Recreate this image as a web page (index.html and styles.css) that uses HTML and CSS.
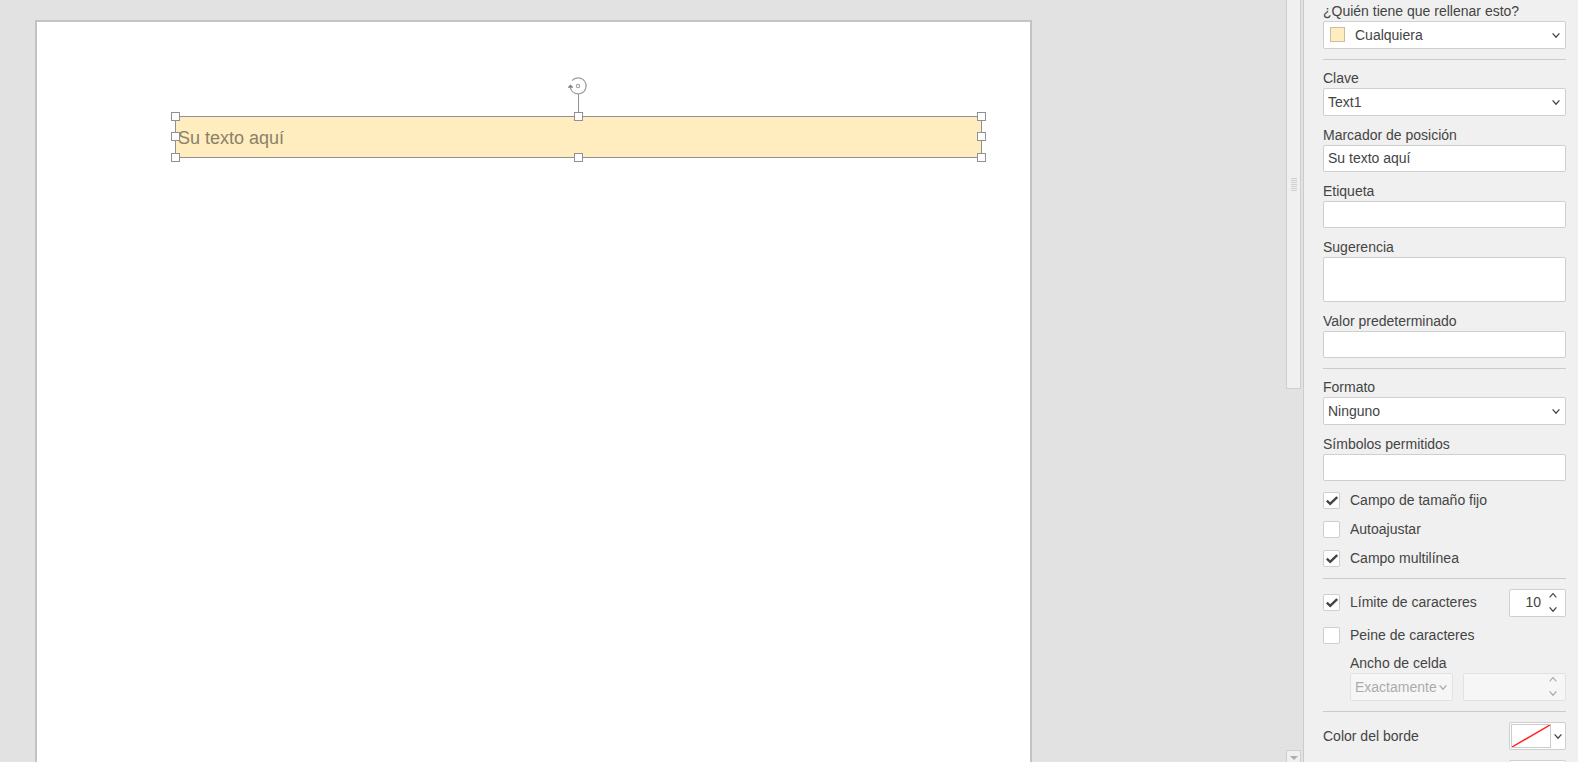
FILE: index.html
```html
<!DOCTYPE html>
<html lang="es">

  <head>
    <meta charset="UTF-8">
    <meta name="viewport" content="width=device-width, initial-scale=1.0">
    <title>Editor de formularios</title>
    <link rel="stylesheet" href="styles.css">
  </head>

  <body>
    <svg class="sprite" width="0" height="0" aria-hidden="true">
      <symbol id="down" viewBox="0 0 8 7"><path d="M.6 1.4 4 5.2 7.4 1.4" fill="none" stroke="currentColor" stroke-width="1.3" /></symbol>
      <symbol id="up" viewBox="0 0 8 7"><path d="M.6 5.4 4 1.6 7.4 5.4" fill="none" stroke="currentColor" stroke-width="1.1" /></symbol>
      <symbol id="check" viewBox="0 0 12 10"><path d="M.8 4.6 4.2 7.8 11.2 1" fill="none" stroke="currentColor" stroke-width="2.4" /></symbol>
    </svg>

    <main class="editor">
      <div class="page">
        <div class="field">
          <span class="field-text">Su texto aquí</span>
          <svg class="rotate" viewBox="0 0 20 20" aria-hidden="true">
            <path d="M4 4.7A8 8 0 1 1 2.3 11.5" fill="none" stroke="#a0a0a0" stroke-width="1.2" />
            <circle cx="10" cy="10" r="1.7" fill="none" stroke="#aaa" stroke-width="1.2" />
            <path d="M0 11.8V11L2.5 8.5 5 11v.8z" fill="#808080" />
          </svg>
          <i class="stem"></i>
          <i class="handle top left"></i>
          <i class="handle top center"></i>
          <i class="handle top right"></i>
          <i class="handle middle left"></i>
          <i class="handle middle right"></i>
          <i class="handle bottom left"></i>
          <i class="handle bottom center"></i>
          <i class="handle bottom right"></i>
        </div>
      </div>
    </main>

    <div class="scrollbar">
      <div class="thumb"><i class="grip"></i></div>
      <button class="scroll-down" aria-label="Bajar"><i class="triangle"></i></button>
    </div>

    <aside class="panel">
      <section class="group">
        <div class="row">
          <label for="role">¿Quién tiene que rellenar esto?</label>
          <div class="select with-swatch">
            <i class="swatch"></i>
            <select id="role"><option>Cualquiera</option></select>
            <svg class="arrow"><use href="#down" /></svg>
          </div>
        </div>
      </section>

      <section class="group">
        <div class="row">
          <label for="key">Clave</label>
          <div class="select">
            <select id="key"><option>Text1</option></select>
            <svg class="arrow"><use href="#down" /></svg>
          </div>
        </div>
        <div class="row">
          <label for="placeholder">Marcador de posición</label>
          <input type="text" id="placeholder" value="Su texto aquí">
        </div>
        <div class="row">
          <label for="tag">Etiqueta</label>
          <input type="text" id="tag">
        </div>
        <div class="row">
          <label for="tip">Sugerencia</label>
          <textarea id="tip"></textarea>
        </div>
        <div class="row">
          <label for="default">Valor predeterminado</label>
          <input type="text" id="default">
        </div>
      </section>

      <section class="group">
        <div class="row">
          <label for="format">Formato</label>
          <div class="select">
            <select id="format"><option>Ninguno</option></select>
            <svg class="arrow"><use href="#down" /></svg>
          </div>
        </div>
        <div class="row">
          <label for="symbols">Símbolos permitidos</label>
          <input type="text" id="symbols">
        </div>
        <label class="check"><input type="checkbox" checked><svg><use href="#check" /></svg>Campo de tamaño fijo</label>
        <label class="check"><input type="checkbox"><svg><use href="#check" /></svg>Autoajustar</label>
        <label class="check"><input type="checkbox" checked><svg><use href="#check" /></svg>Campo multilínea</label>
      </section>

      <section class="group tight">
        <div class="line">
          <label class="check"><input type="checkbox" checked><svg><use href="#check" /></svg>Límite de caracteres</label>
          <div class="spinner small">
            <input type="text" value="10" aria-label="Límite">
            <div class="steps">
              <button aria-label="Más"><svg><use href="#up" /></svg></button>
              <button aria-label="Menos"><svg><use href="#down" /></svg></button>
            </div>
          </div>
        </div>
        <label class="check"><input type="checkbox"><svg><use href="#check" /></svg>Peine de caracteres</label>
        <div class="row indent">
          <label for="cell">Ancho de celda</label>
          <div class="pair">
            <div class="select disabled">
              <select id="cell" disabled><option>Exactamente</option></select>
              <svg class="arrow"><use href="#down" /></svg>
            </div>
            <div class="spinner disabled">
              <input type="text" aria-label="Ancho" disabled>
              <div class="steps">
                <button aria-label="Más" disabled><svg><use href="#up" /></svg></button>
                <button aria-label="Menos" disabled><svg><use href="#down" /></svg></button>
              </div>
            </div>
          </div>
        </div>
      </section>

      <section class="group tight">
        <div class="line">
          <label for="border-color">Color del borde</label>
          <button class="color" id="border-color">
            <svg class="none" viewBox="0 0 38 21" preserveAspectRatio="none"><path d="M0 21 38 0" stroke="#f22" stroke-width="1.4" /></svg>
            <svg class="caret"><use href="#down" /></svg>
          </button>
        </div>
        <div class="line">
          <span></span>
          <button class="color" aria-label="Color de fondo"></button>
        </div>
      </section>
    </aside>
  </body>

</html>
```

FILE: styles.css
```css
* {
  box-sizing: border-box;
}

body {
  display: flex;
  height: 100vh;
  margin: 0;
  overflow: hidden;
  background-color: #e2e2e2;
  color: #444;
  font: 14px/18px "Liberation Sans", Arial, sans-serif;
}

input,
select,
textarea,
button {
  margin: 0;
  border: 1px solid #cfcfcf;
  border-radius: 2px;
  background-color: #fff;
  color: inherit;
  font: inherit;
}

.sprite {
  position: absolute;
}

/* document */
.editor {
  flex: 1;
  display: flex;
  padding: 20px 254px 0 35px;
}

.page {
  flex: 1;
  padding: 94px 48px 0 138px;
  border: 2px solid #c0c4c5;
  border-bottom: 0;
  background-color: #fff;
}

.field {
  position: relative;
  display: flex;
  align-items: center;
  height: 42px;
  padding: 2px 0 0 2px;
  border: 1px solid #919191;
  background-color: #ffedbf;
}

.field-text {
  color: #8b8068;
  font-size: 18px;
  line-height: 24px;
}

.handle {
  position: absolute;
  width: 9px;
  height: 9px;
  border: 1px solid #919191;
  background-color: #fff;
}

.top { top: -5px; }
.middle { top: 15px; }
.bottom { bottom: -5px; }
.left { left: -5px; }
.center { left: calc(50% - 5px); }
.right { right: -5px; }

.stem {
  position: absolute;
  top: -23px;
  left: calc(50% - 1px);
  width: 1px;
  height: 20px;
  background-color: #919191;
}

.rotate {
  position: absolute;
  top: -41px;
  left: calc(50% - 11px);
  width: 20px;
  height: 20px;
}

/* scrollbar */
.scrollbar {
  display: flex;
  flex-direction: column;
  justify-content: space-between;
  width: 17px;
  padding-right: 2px;
}

.thumb {
  display: flex;
  align-items: center;
  justify-content: center;
  height: 51%;
  padding-bottom: 18px;
  border: 1px solid #cfcfcf;
  border-top: 0;
  background-color: #f0f0f0;
}

.grip {
  width: 6px;
  height: 14px;
  background: repeating-linear-gradient(#cfcfcf 0 1px, #f0f0f0 1px 2px);
}

.scroll-down {
  display: flex;
  align-items: center;
  justify-content: center;
  height: 12px;
  padding: 2px 0 0;
  border-bottom: 0;
  border-radius: 0;
  background-color: #f0f0f0;
}

.triangle {
  border: 4px solid transparent;
  border-top-color: #adadad;
  border-bottom: 0;
}

/* settings */
.panel {
  width: 275px;
  padding: 3px 12px 0 19px;
  overflow: hidden;
  border-left: 1px solid #cbcbcb;
  background-color: #f0f0f0;
}

.group {
  display: flex;
  flex-direction: column;
  gap: 11px;
}

.group.tight {
  gap: 10px;
}

.group + .group {
  margin-top: 10px;
  padding-top: 10px;
  border-top: 1px solid #cbcbcb;
}

.row {
  display: flex;
  flex-direction: column;
}

.row > label {
  padding-bottom: 2px;
  line-height: 16px;
}

.row > input {
  height: 27px;
  padding: 0 4px 2px;
}

textarea {
  height: 45px;
  resize: none;
}

.select {
  position: relative;
  display: flex;
}

.select select {
  flex: 1;
  min-width: 0;
  height: 28px;
  padding: 0 4px 1px;
  appearance: none;
}

.select.with-swatch select {
  padding-left: 31px;
}

.swatch {
  position: absolute;
  top: 6px;
  left: 7px;
  width: 15px;
  height: 15px;
  border: 1px solid #cbbd97;
  background-color: #ffedbf;
}

.arrow {
  position: absolute;
  top: 11px;
  right: 6px;
  width: 8px;
  height: 7px;
  pointer-events: none;
}

.check {
  position: relative;
  display: flex;
  align-items: center;
  gap: 10px;
  padding-bottom: 1px;
  line-height: 17px;
}

.check input {
  width: 17px;
  height: 17px;
  appearance: none;
}

.check svg {
  position: absolute;
  left: 3px;
  width: 12px;
  height: 10px;
  visibility: hidden;
}

.check input:checked + svg {
  visibility: visible;
}

.line {
  display: flex;
  align-items: center;
  justify-content: space-between;
}

.spinner {
  display: flex;
  min-width: 0;
  height: 28px;
  border: 1px solid #cfcfcf;
  border-radius: 2px;
  background-color: #fff;
}

.spinner.small {
  width: 57px;
}

.spinner input {
  flex: 1;
  min-width: 0;
  padding: 0 8px 2px 0;
  border: 0;
  background: none;
  text-align: right;
}

.steps {
  display: flex;
  flex-direction: column;
  justify-content: space-between;
  width: 16px;
  padding: 2px 0 3px;
}

.steps button {
  display: flex;
  padding: 0;
  border: 0;
  background: none;
}

.steps svg {
  width: 8px;
  height: 7px;
}

.indent {
  padding-left: 27px;
}

.pair {
  display: grid;
  grid-template-columns: minmax(0, 1fr) minmax(0, 1fr);
  gap: 10px;
}

.disabled {
  opacity: 0.4;
}

.disabled select {
  opacity: 1;
}

.color {
  display: flex;
  align-items: center;
  gap: 3px;
  width: 57px;
  height: 28px;
  padding: 1px;
}

.none {
  width: 40px;
  height: 24px;
  border: 1px solid #cbcbcb;
}

.caret {
  width: 8px;
  height: 7px;
}
```
